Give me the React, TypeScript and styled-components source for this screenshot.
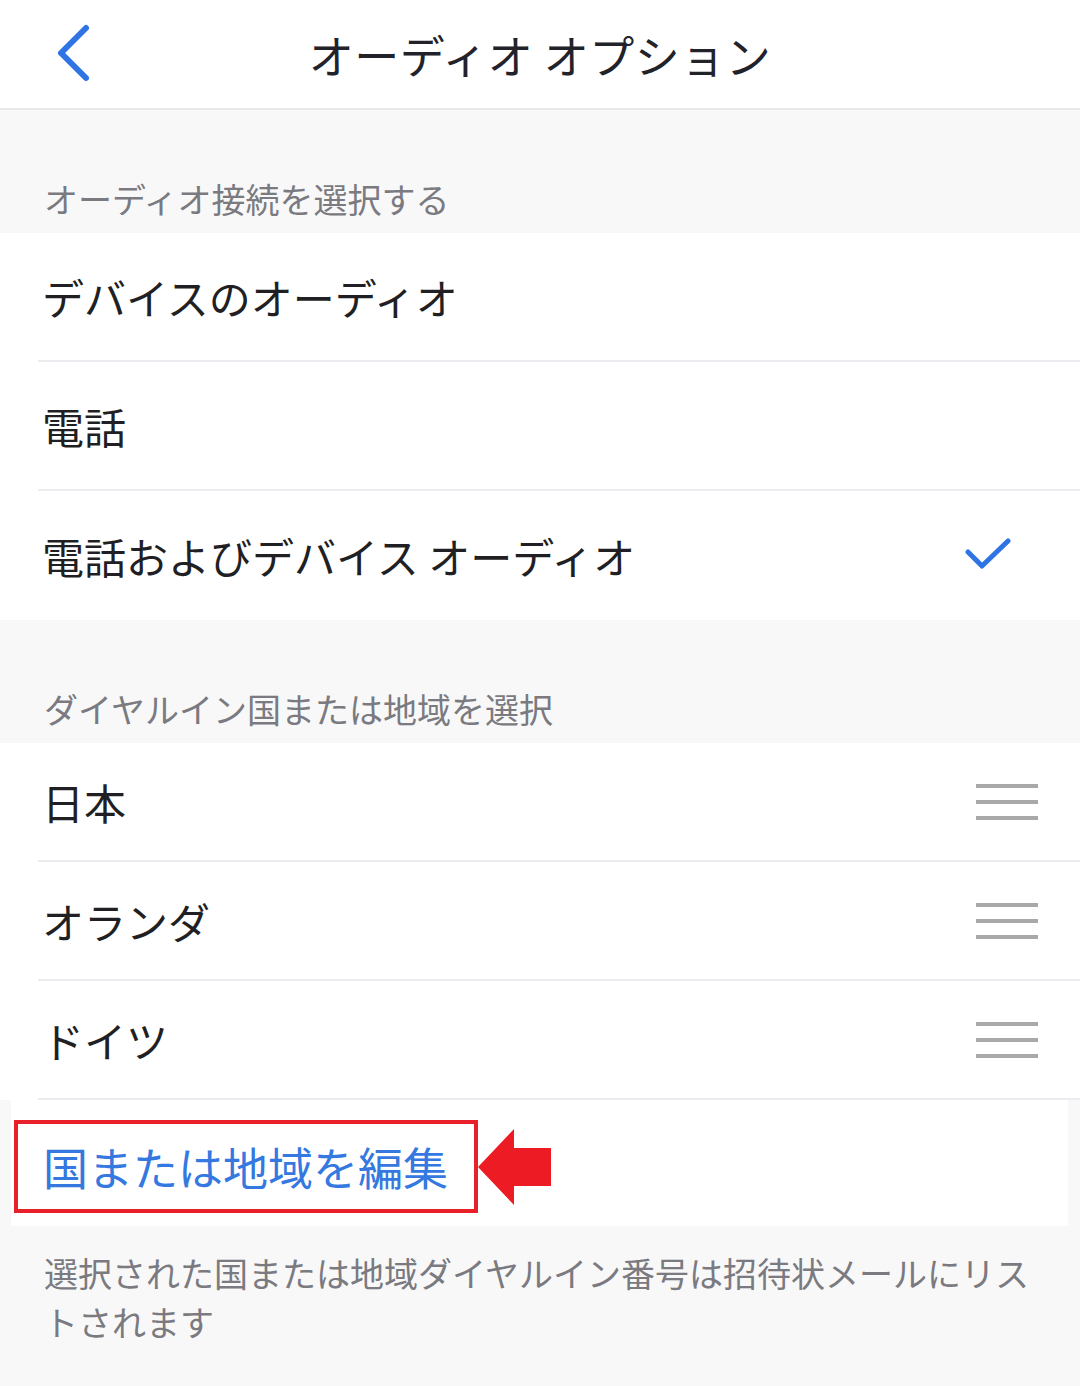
import styled, { createGlobalStyle } from 'styled-components';

const GlobalStyle = createGlobalStyle`
  html, body {
    margin: 0;
    padding: 0;
    background-color: #f8f8f8;
  }
  body {
    font-family: "Noto Sans CJK JP", "Noto Sans", sans-serif;
  }
`;

const audioOptions = [
  { id: 'device', label: 'デバイスのオーディオ', selected: false },
  { id: 'phone', label: '電話', selected: false },
  { id: 'both', label: '電話およびデバイス オーディオ', selected: true },
];

const countries = ['日本', 'オランダ', 'ドイツ'];

const Page = styled.div`
  width: 1080px;
  min-height: 1386px;
  background-color: #f8f8f8;
`;

const NavBar = styled.header`
  position: relative;
  display: flex;
  align-items: center;
  justify-content: center;
  height: 108px;
  background-color: #ffffff;
  border-bottom: 2px solid #e8e8e8;
`;

const BackButton = styled.div`
  position: absolute;
  left: 55px;
  top: 22px;
  width: 40px;
  height: 62px;
  display: flex;
  align-items: center;
  justify-content: center;
`;

const Title = styled.h1`
  margin: 0;
  font-size: 45px;
  font-weight: 400;
  color: #22222a;
  letter-spacing: 0.5px;
`;

const SectionLabel = styled.div<{ height: number }>`
  display: flex;
  align-items: flex-end;
  height: ${p => p.height}px;
  padding: 0 0 10px 44px;
  box-sizing: border-box;
  font-size: 34px;
  color: #7a7a80;
`;

const List = styled.div`
  background-color: #ffffff;
`;

const Row = styled.div<{ height: number; last?: boolean }>`
  display: flex;
  align-items: center;
  justify-content: space-between;
  height: ${p => p.height}px;
  margin-left: 38px;
  padding: 0 42px 0 4px;
  border-bottom: ${p => (p.last ? 'none' : '2px solid #ececf0')};
`;

const RowText = styled.span`
  font-size: 42px;
  color: #1f1f24;
  white-space: pre;
`;

const CheckWrap = styled.span`
  display: flex;
  margin-right: 24px;
`;

const Handle = styled.div`
  display: flex;
  flex-direction: column;
  gap: 12px;
`;

const HandleBar = styled.div`
  width: 62px;
  height: 4px;
  background-color: #a9a9a9;
`;

const EditRow = styled.div`
  display: flex;
  align-items: center;
  margin: 0 12px 0 11px;
  padding: 20px 0 13px 3px;
  background-color: #ffffff;
`;

const HighlightBox = styled.div`
  height: 85px;
  padding: 0 26px 0 25px;
  border: 4px solid #e8202a;
  display: flex;
  align-items: center;
`;

const EditLink = styled.span`
  font-size: 45px;
  color: #3478e0;
`;

const Footer = styled.p`
  margin: 0;
  padding: 22px 44px 40px 44px;
  font-size: 34px;
  line-height: 49px;
  color: #7a7a80;
`;

function ChevronLeft() {
  return (
    <svg width="40" height="62" viewBox="0 0 40 62">
      <polyline
        points="31,6 6,31 31,56"
        fill="none"
        stroke="#2f74e4"
        strokeWidth="6"
        strokeLinecap="round"
        strokeLinejoin="round"
      />
    </svg>
  );
}

function CheckMark() {
  return (
    <svg width="50" height="36" viewBox="0 0 50 36">
      <polyline
        points="4,14 18,28 44,3"
        fill="none"
        stroke="#2f74e4"
        strokeWidth="5"
        strokeLinecap="round"
        strokeLinejoin="round"
      />
    </svg>
  );
}

function RedArrow() {
  return (
    <svg width="73" height="76" viewBox="0 0 73 76">
      <polygon points="0,38 36,0 36,19 73,19 73,57 36,57 36,76" fill="#ed1c24" />
    </svg>
  );
}

function App() {
  return (
    <Page>
      <GlobalStyle />
      <NavBar>
        <BackButton>
          <ChevronLeft />
        </BackButton>
        <Title>オーディオ オプション</Title>
      </NavBar>

      <SectionLabel height={123}>オーディオ接続を選択する</SectionLabel>
      <List>
        {audioOptions.map((opt, i) => (
          <Row key={opt.id} height={i === 2 ? 129 : 127} last={i === audioOptions.length - 1}>
            <RowText>{opt.label}</RowText>
            {opt.selected && (
              <CheckWrap>
                <CheckMark />
              </CheckWrap>
            )}
          </Row>
        ))}
      </List>

      <SectionLabel height={123}>ダイヤルイン国または地域を選択</SectionLabel>
      <List>
        {countries.map(name => (
          <Row key={name} height={117}>
            <RowText>{name}</RowText>
            <Handle>
              <HandleBar />
              <HandleBar />
              <HandleBar />
            </Handle>
          </Row>
        ))}
      </List>

      <EditRow>
        <HighlightBox>
          <EditLink>国または地域を編集</EditLink>
        </HighlightBox>
        <RedArrow />
      </EditRow>

      <Footer>選択された国または地域ダイヤルイン番号は招待状メールにリストされます</Footer>
    </Page>
  );
}

export default App;
